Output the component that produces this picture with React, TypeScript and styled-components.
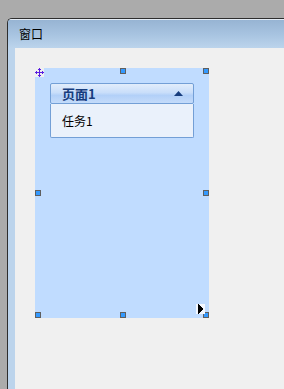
import styled, { createGlobalStyle } from "styled-components"

const GlobalStyle = createGlobalStyle`
    html, body {
        margin: 0;
        padding: 0;
        background: #ababab;
        overflow: hidden;
    }

    body {
        font-family: "Noto Sans CJK SC", "DejaVu Sans", sans-serif;
        font-size: 12px;
    }
`

const Screen = styled.div`
    width: 284px;
    height: 389px;
    padding: 18px 0 0 7px;
    box-sizing: border-box;
    overflow: hidden;
`

const Window = styled.div`
    height: 371px;
    display: flex;
    flex-direction: column;
    border-top: 1px solid #2e2e2e;
    border-left: 1px solid #2e2e2e;
    border-top-left-radius: 5px;
    overflow: hidden;
    background: #bcd4ec;
`

const TitleBar = styled.div`
    height: 28px;
    flex-shrink: 0;
    display: flex;
    align-items: center;
    padding-left: 11px;
    border-top: 1px solid #e4ecf5;
    background: linear-gradient(to bottom, #97b4d3 0%, #a7c3e0 50%, #bcd4ec 100%);
    color: #000;
    font-size: 12px;
    line-height: 1;
`

const Frame = styled.div`
    flex: 1;
    display: flex;
    padding-left: 7px;
`

const Client = styled.div`
    flex: 1;
    background: #f0f0f0;
    padding: 20px 0 0 20px;
`

const DesignPanel = styled.div`
    position: relative;
    width: 174px;
    height: 250px;
    box-sizing: border-box;
    background: #c0dcff;
    padding: 15px 15px 0 15px;
`

const Handle = styled.span<{ $x: number; $y: number }>`
    position: absolute;
    left: ${p => p.$x}px;
    top: ${p => p.$y}px;
    width: 6px;
    height: 6px;
    box-sizing: border-box;
    border: 1px solid #5f5f5f;
    background: #3399ff;
`

const MoveGrip = styled.span`
    position: absolute;
    left: 0;
    top: 0;
    width: 9px;
    height: 9px;
    background: #f0f0f0;
    display: flex;
    align-items: center;
    justify-content: center;
`

const Cursor = styled.span`
    position: absolute;
    left: 161px;
    top: 236px;
    width: 9px;
    height: 10px;
    background: #f4f8ff;
    display: flex;
`

const Accordion = styled.div`
    width: 144px;
    display: flex;
    flex-direction: column;
`

const Header = styled.div`
    height: 19px;
    display: flex;
    align-items: center;
    justify-content: space-between;
    padding: 0 10px 0 11px;
    border: 1px solid #739fd6;
    border-radius: 2px;
    background: linear-gradient(to bottom, #e2edfb 0%, #c9defa 45%, #b2d0f8 60%, #c4dbfa 100%);
    color: #173d7e;
    font-weight: bold;
    font-size: 13px;
`

const Content = styled.div`
    height: 33px;
    display: flex;
    align-items: center;
    padding-left: 11px;
    border: 1px solid #739fd6;
    border-top: none;
    border-radius: 0 0 2px 2px;
    background: #eaf1fb;
    color: #000;
    font-size: 12px;
`

const handles = [
    { x: 85, y: 0 }, { x: 168, y: 0 },
    { x: 0, y: 122 }, { x: 168, y: 122 },
    { x: 0, y: 244 }, { x: 85, y: 244 }, { x: 168, y: 244 },
]

export default function App() {
    return (
        <Screen>
            <GlobalStyle />
            <Window>
                <TitleBar>窗口</TitleBar>
                <Frame>
                    <Client>
                        <DesignPanel>
                            <Accordion>
                                <Header>
                                    <span>页面1</span>
                                    <svg width="9" height="5" viewBox="0 0 9 5">
                                        <path d="M4.5 0 L9 5 L0 5 Z" fill="#173d7e" />
                                    </svg>
                                </Header>
                                <Content>任务1</Content>
                            </Accordion>

                            <MoveGrip>
                                <svg width="9" height="9" viewBox="0 0 9 9" shapeRendering="crispEdges">
                                    <path d="M4 0h1v1h1v1H5v2h2V3h1v1h1v1H8v1H7V5H5v2h1v1H5v1H4V8H3V7h1V5H2v1H1V5H0V4h1V3h1v1h2V2H3V1h1z" fill="#5a1ee0" />
                                </svg>
                            </MoveGrip>

                            {handles.map((h, i) => <Handle key={i} $x={h.x} $y={h.y} />)}

                            <Cursor>
                                <svg width="9" height="10" viewBox="0 0 9 10" shapeRendering="crispEdges">
                                    <path d="M2 0h1v1h1v1h1v1h1v1h1v2H6v1H5v1H4v1H3v1H2z" fill="#000" />
                                </svg>
                            </Cursor>
                        </DesignPanel>
                    </Client>
                </Frame>
            </Window>
        </Screen>
    )
}
